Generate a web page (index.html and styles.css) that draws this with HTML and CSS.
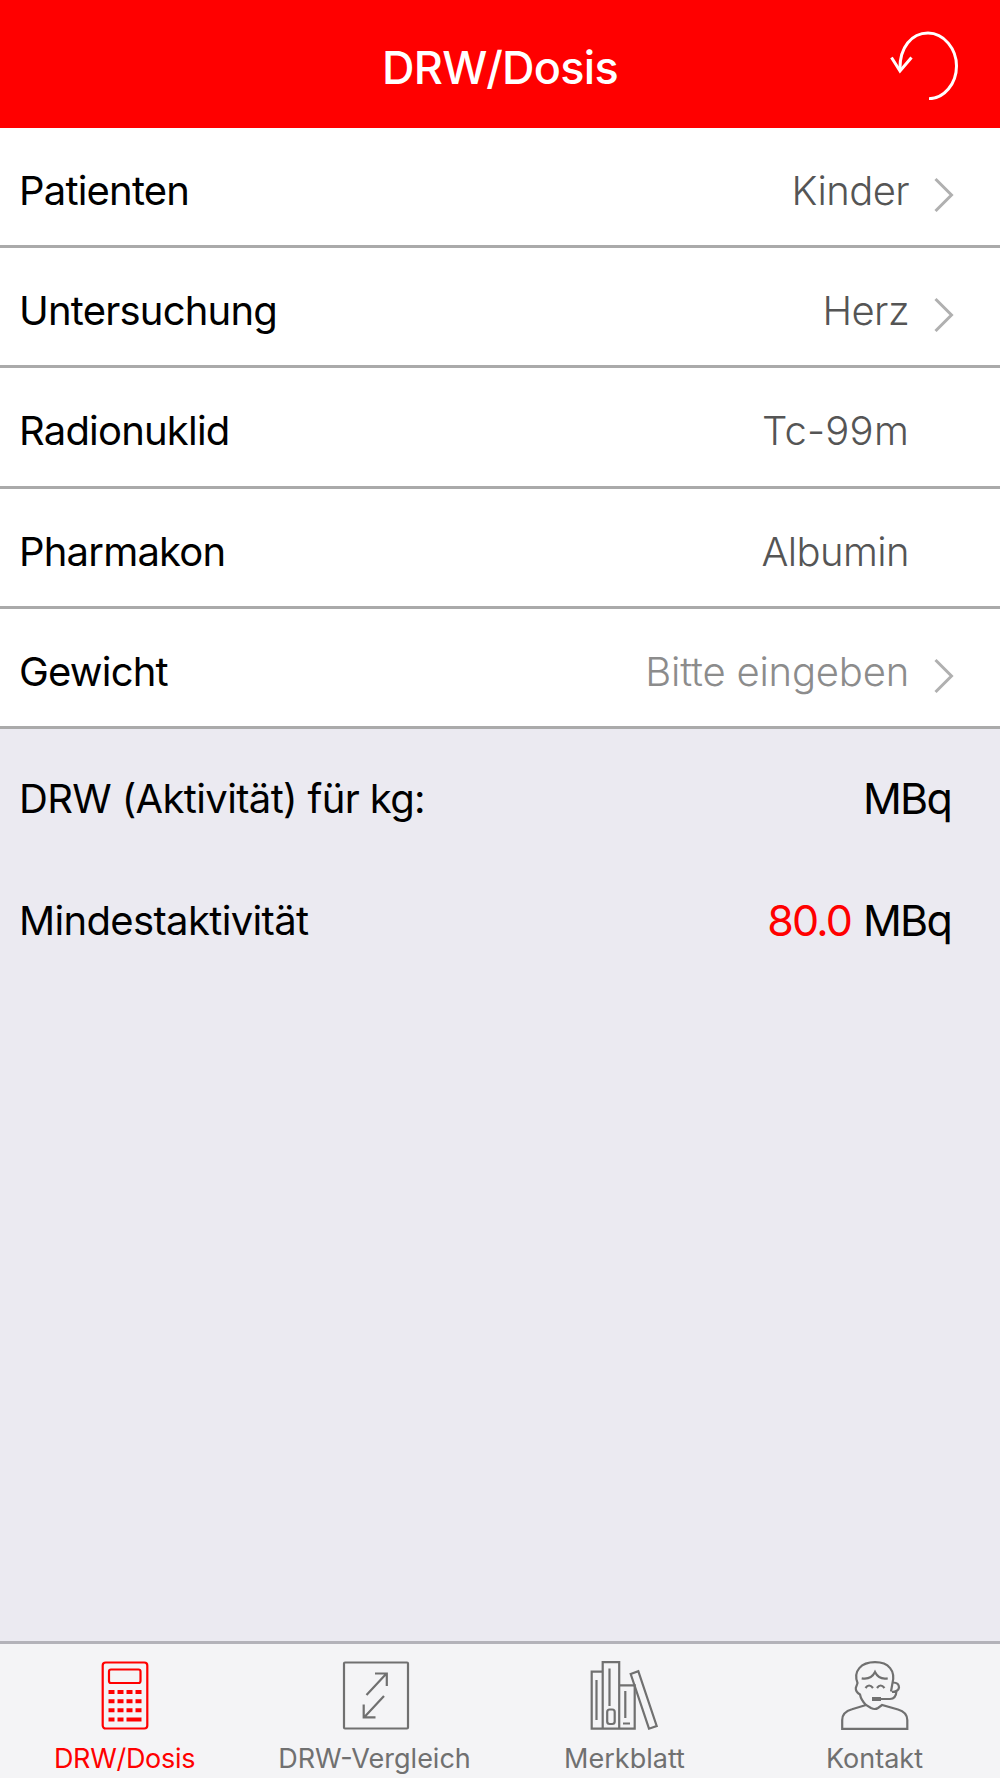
FILE: index.html
```
<!DOCTYPE html>
<html lang="de">

<head>
    <meta charset="UTF-8">
    <title>DRW/Dosis</title>
    <link rel="stylesheet" href="styles.css">
</head>

<body>

    <header class="header">
        <h1>DRW/Dosis</h1>
        <svg class="reset" width="80" height="80" viewBox="0 0 80 80">
            <path d="M20 51 C19 27 32 13 48 13 C64 13 76.500 29 76.500 46 C76.500 64 64 78.500 49 78.700" />
            <path d="M11.500 37.500 L20 51 L31.500 37.500" />
        </svg>
    </header>

    <ul class="list">
        <li class="row">
            <span class="label">Patienten</span>
            <span class="value">Kinder</span>
            <svg class="chevron" width="20" height="36" viewBox="0 0 20 36"><path d="M1.500 2 L17.500 18 L1.500 34" /></svg>
        </li>
        <li class="row">
            <span class="label">Untersuchung</span>
            <span class="value">Herz</span>
            <svg class="chevron" width="20" height="36" viewBox="0 0 20 36"><path d="M1.500 2 L17.500 18 L1.500 34" /></svg>
        </li>
        <li class="row">
            <span class="label">Radionuklid</span>
            <span class="value nuclide">Tc-99m</span>
        </li>
        <li class="row">
            <span class="label">Pharmakon</span>
            <span class="value">Albumin</span>
        </li>
        <li class="row">
            <span class="label">Gewicht</span>
            <span class="value placeholder">Bitte eingeben</span>
            <svg class="chevron" width="20" height="36" viewBox="0 0 20 36"><path d="M1.500 2 L17.500 18 L1.500 34" /></svg>
        </li>
    </ul>

    <main class="results">
        <div class="result">
            <span class="label">DRW (Aktivität) für kg:</span>
            <span class="unit">MBq</span>
        </div>
        <div class="result">
            <span class="label">Mindestaktivität</span>
            <span class="amount">80.0</span>
            <span class="unit">MBq</span>
        </div>
    </main>

    <nav class="tabs">
        <a class="tab active">
            <svg width="70" height="72" viewBox="0 0 70 72">
                <rect x="12.700" y="2.500" width="44.600" height="66" rx="3" />
                <rect x="19" y="9.500" width="31.500" height="13.500" rx="2" />
                <path class="keys" d="M18.500 32h6m3 0h6m3 0h6m3 0h6M18.500 41.200h6m3 0h6m3 0h6m3 0h6M18.500 50.300h6m3 0h6m3 0h6m3 0h6M18.500 59.500h6m3 0h6m3 0h15" />
            </svg>
            <span>DRW/Dosis</span>
        </a>
        <a class="tab">
            <svg width="70" height="72" viewBox="0 0 70 72">
                <rect x="4" y="2.500" width="64" height="66" rx="1" />
                <path d="M26.500 35 L46.500 13.500 M35 13.500 H46.800 V26 M44 36 L24 57.500 M23.700 44.500 V57.300 H35.500" />
            </svg>
            <span>DRW-Vergleich</span>
        </a>
        <a class="tab">
            <svg width="70" height="72" viewBox="0 0 70 72">
                <path d="M12.700 11.700 H1.700 V68.700 H44.700 V25.300 H29.200 M12.700 68.700 V2.200 H29.200 V68.700" />
                <path d="M6.500 20 V60 M19.500 8.500 V46 M35.300 31 V58 M33 63.500 H40" />
                <rect x="17.200" y="49.500" width="7.500" height="14.500" rx="2.500" />
                <path d="M40.700 14 L48.300 11.200 L66.700 66 L59 68.700 Z" />
            </svg>
            <span>Merkblatt</span>
        </a>
        <a class="tab">
            <svg width="70" height="72" viewBox="0 0 70 72">
                <path d="M26 45 L12 49.300 Q2.300 52 2.200 60 V68.800 H67.300 V60 Q67 52 58 49.500 L42 45 L38 48 Q35 50 31 48 L26 45 Q21 40 20 34.500 Q15.500 32 15.800 28 L17.500 23 C13 11 21 2.200 35 2.200 C49 2.200 55.500 11 52.500 23 L51 31.500" />
                <path d="M21.700 18.300 Q31 20 35 12 Q39 20 47.700 18.300" />
                <path d="M25.500 28 Q29 23 33 28 M37 28 Q40.500 23 44.500 28" />
                <path d="M53 22.500 Q59 22.500 59 27.500 Q58.500 31.500 52 32 M56.500 31 Q56 39 50 39 H41" />
                <path class="mic" d="M32 39 H41" />
            </svg>
            <span>Kontakt</span>
        </a>
    </nav>

</body>

</html>
```
FILE: styles.css
```
* {
    box-sizing: border-box;
}

body {
    display: flex;
    flex-direction: column;
    height: 1778px;
    margin: 0;
    background: #ebeaf1;
    color: #000;
    font-family: Inter, "Liberation Sans", sans-serif;
    font-size: 40px;
}

svg {
    fill: none;
    stroke: currentColor;
    stroke-width: 2.2;
}

.header {
    display: grid;
    grid-template-columns: 120px 1fr 120px;
    height: 127.5px;
    background: #f00;
    color: #fff;
}

.header h1 {
    grid-column: 2;
    margin: 0;
    padding-top: 8px;
    font-size: 45px;
    font-weight: 500;
    letter-spacing: -0.7px;
    line-height: 120px;
    text-align: center;
}

.reset {
    margin-top: 20px;
    stroke-width: 3;
}

.list {
    margin: 0;
    padding: 0;
    list-style: none;
    background: #fff;
}

.row {
    display: flex;
    align-items: center;
    height: 120.4px;
    padding: 8px 45px 0 19px;
    border-bottom: 3px solid #aaa;
}

.label {
    flex: 1;
    letter-spacing: -0.8px;
}

.value {
    margin-right: 24px;
    color: #555;
    font-weight: 300;
    letter-spacing: -0.6px;
}

.value:last-child {
    margin-right: 46px;
}

.value.nuclide {
    letter-spacing: 0.2px;
}

.value.placeholder {
    color: #8c8c8c;
    letter-spacing: -0.2px;
}

.chevron {
    width: 22px;
    margin-top: 9px;
    color: #b0b0b0;
    stroke-width: 3;
}

.results {
    flex: 1;
    padding: 8px 49px 0 19px;
}

.result {
    display: flex;
    align-items: center;
    height: 122px;
}

.result .label {
    letter-spacing: -0.65px;
}

.unit {
    font-size: 43px;
    letter-spacing: -1.8px;
}

.amount {
    margin-right: 12px;
    color: #f00;
    font-size: 43px;
    letter-spacing: -1.8px;
}

.tabs {
    display: grid;
    grid-template-columns: repeat(4, 1fr);
    height: 137px;
    border-top: 3px solid #b3b2b9;
    background: #f4f4f6;
}

.tab {
    display: flex;
    flex-direction: column;
    align-items: center;
    padding-top: 16px;
    color: #707070;
    font-size: 27px;
    line-height: 32px;
}

.tab span {
    margin-top: 11px;
    padding-right: 1px;
}

.active {
    color: #f00;
    letter-spacing: -0.3px;
}

.keys {
    stroke-width: 4;
}

.mic {
    stroke-width: 4;
}
```
